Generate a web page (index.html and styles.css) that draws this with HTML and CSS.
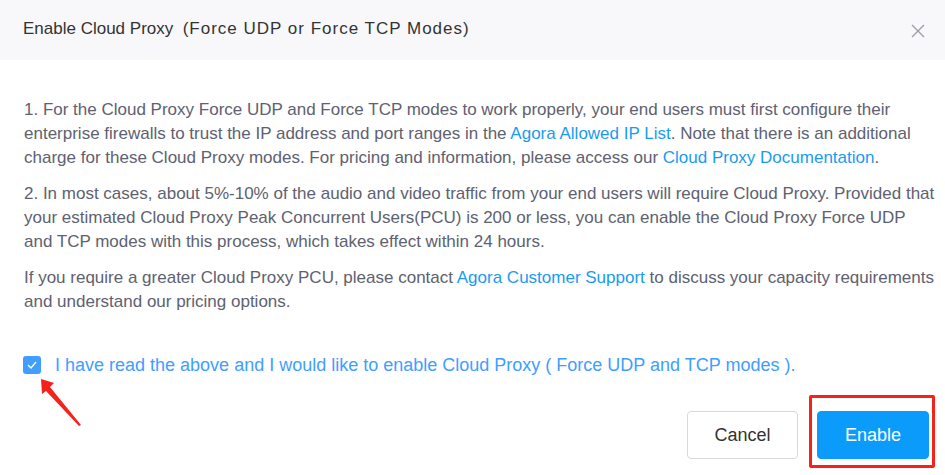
FILE: index.html
```html
<!DOCTYPE html>
<html lang="en">
<head>
    <meta charset="UTF-8">
    <meta name="viewport" content="width=device-width, initial-scale=1.0">
    <title>Enable Cloud Proxy</title>
    <link rel="stylesheet" href="styles.css">
</head>
<body>
    <div class="dialog">
        <div class="dialog-header">
            <span class="dialog-title">Enable Cloud Proxy&nbsp; <span class="title-note">(Force UDP or Force TCP Modes)</span></span>
            <svg class="close-icon" width="14" height="14" viewBox="0 0 14 14">
                <path d="M1 1 L13 13 M13 1 L1 13" stroke="#9a9ca3" stroke-width="1.3" fill="none"/>
            </svg>
        </div>
        <div class="dialog-body">
            <p>1. For the Cloud Proxy Force UDP and Force TCP modes to work properly, your end users must first configure their enterprise firewalls to trust the IP address and port ranges in the <a href="#">Agora Allowed IP List</a>. Note that there is an additional charge for these Cloud Proxy modes. For pricing and information, please access our <a href="#">Cloud Proxy Documentation</a>.</p>
            <p>2. In most cases, about 5%-10% of the audio and video traffic from your end users will require Cloud Proxy. Provided that your estimated Cloud Proxy Peak Concurrent Users(PCU) is 200 or less, you can enable the Cloud Proxy Force UDP and TCP modes with this process, which takes effect within 24 hours.</p>
            <p>If you require a greater Cloud Proxy PCU, please contact <a href="#">Agora Customer Support</a> to discuss your capacity requirements and understand our pricing options.</p>

            <label class="agree">
                <span class="checkbox">
                    <svg width="12" height="10" viewBox="0 0 12 10">
                        <polyline points="2,5 5,8 10,2" stroke="#fff" stroke-width="1.4" fill="none"/>
                    </svg>
                </span>
                I have read the above and I would like to enable Cloud Proxy ( Force UDP and TCP modes ).
            </label>
            <svg class="arrow" width="50" height="54" viewBox="0 0 50 54">
                <polygon points="5,4 18,8 14,12 45,50 43,51 10,16 6,19" fill="#f5221c"/>
            </svg>
        </div>
        <div class="dialog-footer">
            <button class="btn">Cancel</button>
            <span class="highlight">
                <button class="btn btn-primary">Enable</button>
            </span>
        </div>
    </div>
</body>
</html>
```

FILE: styles.css
```css
body {
    margin: 0;
    background: #fff;
    font-family: "Liberation Sans", Arial, sans-serif;
}
.dialog {
    width: 945px;
    height: 475px;
    overflow: hidden;
}
.dialog-header {
    height: 60px;
    background: #f8f8fa;
    display: flex;
    align-items: center;
    justify-content: space-between;
    padding: 0 20px 0 23px;
}
.dialog-title {
    font-size: 17px;
    color: #333;
    margin-top: -2px;
}
.title-note {
    letter-spacing: 1px;
}
.close-icon {
    margin-top: 1px;
}
.dialog-body {
    position: relative;
    padding: 38px 10px 0 24px;
}
.dialog-body p {
    margin: 0 0 12px;
    font-size: 17px;
    line-height: 24px;
    color: #5e6170;
}
.dialog-body a {
    color: #1a9bf0;
    text-decoration: none;
}
.agree {
    display: flex;
    align-items: center;
    gap: 14px;
    margin: 39px 0 0 -1px;
    font-size: 18px;
    line-height: 24px;
    color: #409eff;
}
.checkbox {
    width: 18px;
    height: 18px;
    border-radius: 3px;
    background: #409eff;
    display: flex;
    align-items: center;
    justify-content: center;
}
.arrow {
    position: absolute;
    left: 36px;
    top: 315px;
}
.dialog-footer {
    display: flex;
    justify-content: flex-end;
    gap: 19px;
    padding: 34px 16px 0 0;
}
.btn {
    width: 111px;
    height: 48px;
    border: 1px solid #d8d9e0;
    border-radius: 4px;
    background: #fff;
    color: #333;
    font-family: "Liberation Sans", Arial, sans-serif;
    font-size: 18px;
}
.btn-primary {
    width: 112px;
    border-color: #0b9cfb;
    background: #0b9cfb;
    color: #fff;
}
.highlight {
    position: relative;
    display: block;
}
.highlight::after {
    content: "";
    position: absolute;
    left: -8px;
    right: -6px;
    top: -16px;
    bottom: -9px;
    border: 3px solid #f5221c;
    border-radius: 2px;
}
```
